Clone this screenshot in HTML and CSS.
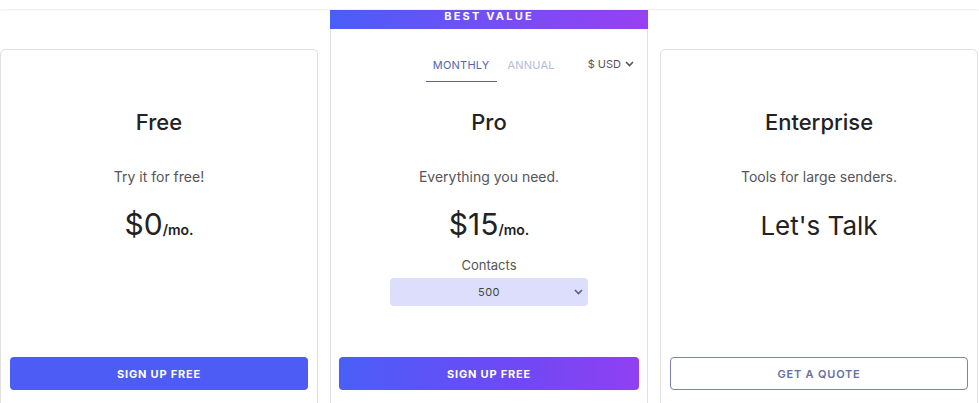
FILE: index.html
```html
<!DOCTYPE html>
<html>
<head>
<meta charset="utf-8">
<link rel="stylesheet" href="styles.css">
</head>
<body>
<div class="topbar"></div>
<div class="plans">
  <div class="card">
    <h2 class="title">Free</h2>
    <p class="desc">Try it for free!</p>
    <div class="price"><span class="amount">$0</span><span class="per">/mo.</span></div>
    <div class="spacer"></div>
    <button class="btn btn-solid">SIGN UP FREE</button>
  </div>
  <div class="card card-pro">
    <div class="badge">BEST VALUE</div>
    <div class="pro-body">
      <div class="tabs">
        <div class="tab-group">
          <span class="tab tab-active">MONTHLY</span>
          <span class="tab">ANNUAL</span>
        </div>
        <span class="currency">$ USD
          <svg width="9" height="6" viewBox="0 0 9 6"><path d="M1 1l3.5 3.5L8 1" fill="none" stroke="#555" stroke-width="1.6"/></svg>
        </span>
      </div>
      <h2 class="title title-pro">Pro</h2>
      <p class="desc">Everything you need.</p>
      <div class="price"><span class="amount">$15</span><span class="per">/mo.</span></div>
      <div class="contacts">Contacts</div>
      <div class="select">500
        <svg class="sel-chev" width="9" height="6" viewBox="0 0 9 6"><path d="M1 1l3.5 3.5L8 1" fill="none" stroke="#5a5f80" stroke-width="1.6"/></svg>
      </div>
      <div class="spacer"></div>
      <button class="btn btn-grad">SIGN UP FREE</button>
    </div>
  </div>
  <div class="card">
    <h2 class="title">Enterprise</h2>
    <p class="desc">Tools for large senders.</p>
    <div class="price"><span class="amount talk">Let's Talk</span></div>
    <div class="spacer"></div>
    <button class="btn btn-outline">GET A QUOTE</button>
  </div>
</div>
</body>
</html>
```

FILE: styles.css
```css
* { box-sizing: border-box; }
html, body { margin: 0; padding: 0; }
body {
  width: 979px;
  height: 403px;
  overflow: hidden;
  background: #fff;
  font-family: Inter, "Noto Sans", sans-serif;
  color: #222;
}
.topbar {
  height: 9px;
  background: #fff;
  box-shadow: 0 1px 2px rgba(0,0,0,0.08);
  position: relative;
  z-index: 2;
}
.plans {
  display: flex;
  gap: 12px;
  align-items: flex-start;
}
.card {
  width: 318px;
  height: 360px;
  margin-top: 40px;
  border: 1px solid #e0e0e0;
  border-radius: 5px;
  background: #fff;
  display: flex;
  flex-direction: column;
  align-items: center;
  padding: 58px 9px 18px;
}
.card-pro {
  margin-top: 1px;
  padding: 0;
  border-radius: 0;
  border-top: none;
  height: 399px;
  align-items: stretch;
}
.badge {
  height: 19px;
  background: linear-gradient(90deg, #4a5ef8 0%, #7a4cf5 60%, #9840f2 100%);
  color: #fff;
  font-size: 11px;
  font-weight: 700;
  letter-spacing: 2.2px;
  text-align: center;
  line-height: 12px;
  margin: 0 -1px;
}
.pro-body {
  display: flex;
  flex-direction: column;
  align-items: center;
  padding: 0 8px 18px;
  flex: 1;
}
.tabs {
  width: 100%;
  display: flex;
  justify-content: flex-end;
  align-items: flex-start;
  padding-top: 29px;
  padding-right: 5px;
  gap: 26px;
}
.tab-group { display: flex; }
.tab {
  font-size: 11px;
  color: #b3bbdc;
  padding: 0 7px 9px;
  margin-left: 4px;
  letter-spacing: 0.2px;
}
.tab-active {
  color: #5566a8;
  border-bottom: 1.5px solid #5a6290;
  margin-left: 0;
}
.currency {
  font-size: 11px;
  color: #555;
  display: flex;
  align-items: center;
  gap: 4px;
  margin-top: -1px;
}
.title {
  font-size: 22px;
  font-weight: 500;
  margin: 0;
  line-height: 28px;
  color: #222;
}
.title-pro { margin-top: 26px; }
.desc {
  font-size: 14px;
  color: #555;
  margin: 32px 0 0;
  line-height: 18px;
}
.price {
  margin-top: 19px;
  display: flex;
  align-items: baseline;
  line-height: 38px;
}
.amount {
  font-size: 30px;
  color: #222;
}
.talk { font-size: 26px; margin-top: 2px; }
.per {
  font-size: 14px;
  font-weight: 600;
  color: #222;
}
.contacts {
  font-size: 13px;
  color: #555;
  margin-top: 8px;
  line-height: 16px;
}
.select {
  margin-top: 5px;
  width: 198px;
  height: 28px;
  border-radius: 4px;
  background: #dcdefb;
  font-size: 11px;
  color: #444;
  display: flex;
  align-items: center;
  justify-content: center;
  position: relative;
  letter-spacing: 0.5px;
}
.sel-chev {
  position: absolute;
  right: 5px;
  top: 11px;
}
.spacer { flex: 1; }
.btn {
  flex: none;
  width: 100%;
  height: 33px;
  border-radius: 4px;
  border: none;
  font-family: Inter, "Noto Sans", sans-serif;
  font-size: 11px;
  font-weight: 700;
  letter-spacing: 0.8px;
  color: #fff;
}
.btn-solid { background: #4e5cf6; }
.btn-grad {
  background: linear-gradient(90deg, #4a5ef8 0%, #7048f4 60%, #9040f2 100%);
}
.btn-outline {
  background: #fff;
  border: 1px solid #7c82b0;
  color: #6670a0;
  font-weight: 600;
}
```
